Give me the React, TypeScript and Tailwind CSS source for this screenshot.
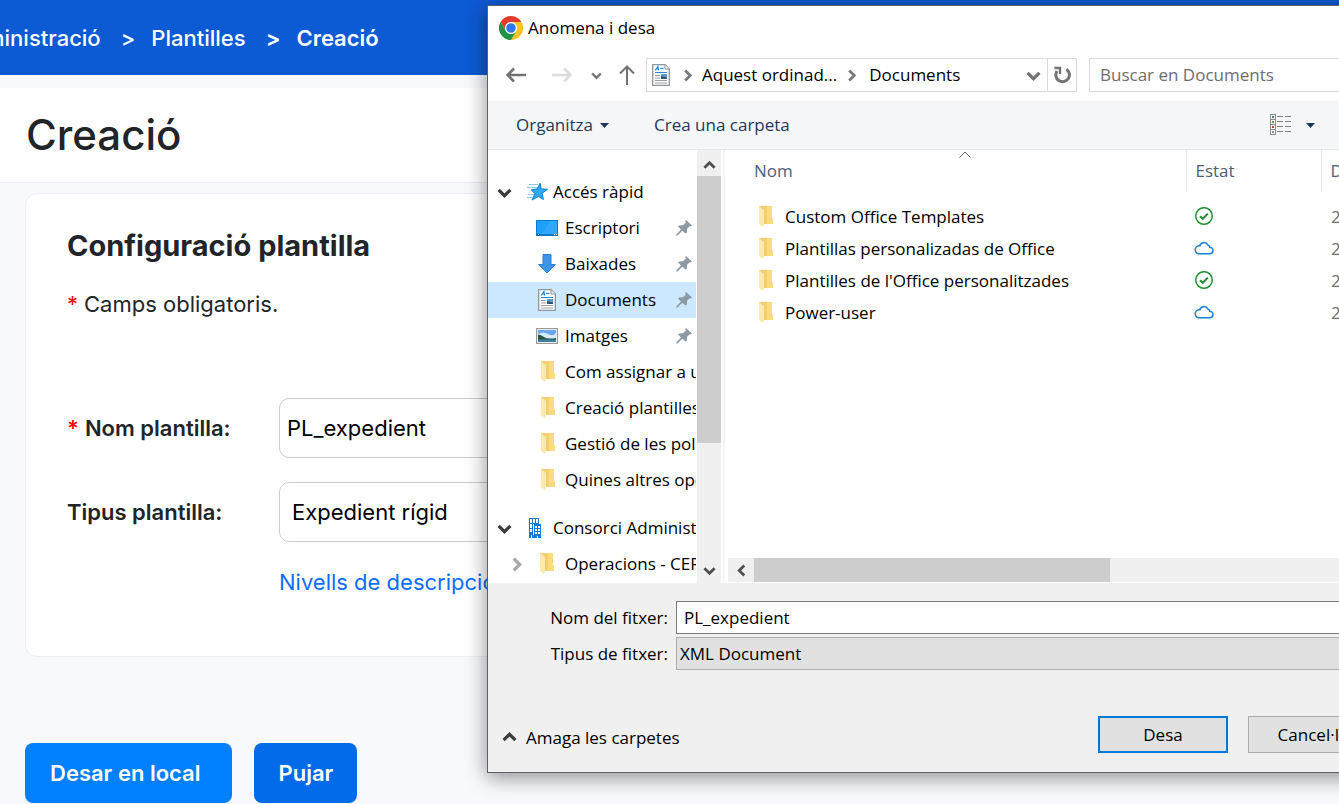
import { useState, type ReactNode } from 'react';

type IconName = 'desktop' | 'download' | 'document' | 'image' | 'folder';

const QUICK_ACCESS: { label: string; icon: IconName; pinned?: boolean }[] = [
  { label: 'Escriptori', icon: 'desktop', pinned: true },
  { label: 'Baixades', icon: 'download', pinned: true },
  { label: 'Documents', icon: 'document', pinned: true },
  { label: 'Imatges', icon: 'image', pinned: true },
  { label: 'Com assignar a un', icon: 'folder' },
  { label: 'Creació plantilles', icon: 'folder' },
  { label: 'Gestió de les polí', icon: 'folder' },
  { label: 'Quines altres oper', icon: 'folder' },
];

const FILES = [
  { name: 'Custom Office Templates', synced: true },
  { name: 'Plantillas personalizadas de Office', synced: false },
  { name: "Plantilles de l'Office personalitzades", synced: true },
  { name: 'Power-user', synced: false },
];

const ChromeLogo = () => (
  <svg className="h-6 w-6 shrink-0" viewBox="0 0 24 24">
    <circle cx="12" cy="12" r="12" fill="#fff" />
    <path d="M1.6 6 A12 12 0 0 1 22.4 6 L12 6 A6 6 0 0 0 6.8 15 Z" fill="#e33b2e" />
    <path d="M22.4 6 A12 12 0 0 1 12 24 L17.2 15 A6 6 0 0 0 12 6 Z" fill="#fcc31e" />
    <path d="M12 24 A12 12 0 0 1 1.6 6 L6.8 15 A6 6 0 0 0 17.2 15 Z" fill="#229342" />
    <circle cx="12" cy="12" r="5.8" fill="#fff" />
    <circle cx="12" cy="12" r="4.8" fill="#2f7bee" />
  </svg>
);

const Chevron = ({ dir, className }: { dir: 'up' | 'down' | 'left' | 'right'; className: string }) => {
  const d = {
    down: 'M1.5 4.5 L7 10 L12.5 4.5',
    up: 'M1.5 9.5 L7 4 L12.5 9.5',
    right: 'M4.5 1.5 L10 7 L4.5 12.5',
    left: 'M10 1.5 L4.5 7 L10 12.5',
  }[dir];
  return (
    <svg className={`shrink-0 ${className}`} viewBox="0 0 14 14" fill="none" stroke="currentColor" strokeWidth="3">
      <path d={d} />
    </svg>
  );
};

const FolderIcon = () => (
  <svg className="h-[22px] w-[15px] shrink-0" viewBox="0 0 15 22">
    <path d="M1 0 H14 V12 L15 13 V18 H5 Z" fill="#f4cf6e" />
    <path d="M9 0 H14 V12 L15 13 V18 H9 Z" fill="#fadb80" />
    <path d="M1 0 L6 4 V18 L5 21 L1 18 Z" fill="#ffe9ad" />
  </svg>
);

const DocumentIcon = () => (
  <svg className="h-[22px] w-[18px] shrink-0" viewBox="0 0 18 22" fill="none">
    <path d="M.7 .7 H13 L17.3 5 V21.3 H.7 Z" fill="#fff" stroke="#8f9499" strokeWidth="1.3" />
    <path d="M13 .7 V5 H17.3" fill="#eceff1" stroke="#8f9499" />
    <path d="M3 6.5 L6 2.5 L6.5 6.5 M4.5 5 H7" stroke="#1d8bd8" strokeWidth="1.2" />
    <path d="M8 4.5 H11.5 M3 8.5 H15" stroke="#1d8bd8" strokeWidth="1.2" />
    <path d="M3 11.5 H8 M3 14 H8 M3 16.5 H15 M3 19 H15" stroke="#9a9fa3" />
    <rect x="9" y="10" width="6" height="5" fill="#5a9bd0" />
    <path d="M9 15 V12 L15 13.5 V15 Z" fill="#2f5570" />
  </svg>
);

const DesktopIcon = () => (
  <svg className="h-4 w-[22px] shrink-0" viewBox="0 0 22 16">
    <rect width="22" height="16" fill="#0b78cc" />
    <rect x="1" y="1" width="20" height="13" fill="#1ea0f8" />
    <path d="M14 1 H21 V14 H6 Z" fill="#2fa8ff" />
    <path d="M2 14.5 H3 M18 14.5 H19 M20 14.5 H21" stroke="#fff" strokeWidth="1" />
  </svg>
);

const DownloadIcon = () => (
  <svg className="h-5 w-[18px] shrink-0" viewBox="0 0 18 20">
    <path d="M5 .5 H13 V10.5 H17.3 L9 19 L.7 10.5 H5 Z" fill="#3a96e8" stroke="#2b7fd0" />
  </svg>
);

const ImageIcon = () => (
  <svg className="h-4 w-[22px] shrink-0" viewBox="0 0 22 16">
    <rect x=".6" y=".6" width="20.8" height="14.8" fill="#fff" stroke="#9b9b9b" strokeWidth="1.2" />
    <rect x="2" y="2" width="18" height="12" fill="#6aa6ee" />
    <path d="M2 6 Q7 3 12 6 T20 5 V11 H2 Z" fill="#d5ebfb" />
    <path d="M2 6.5 Q5 6.5 8 9 T20 10 V12 H2 Z" fill="#2b5440" />
    <path d="M2 11.5 H20 V14 H2 Z" fill="#3f7fa3" />
  </svg>
);

const ICONS: Record<IconName, ReactNode> = {
  desktop: <DesktopIcon />,
  download: <DownloadIcon />,
  document: <DocumentIcon />,
  image: <ImageIcon />,
  folder: <FolderIcon />,
};

const StarIcon = () => (
  <svg className="h-5 w-[22px] shrink-0" viewBox="0 0 22 20" fill="none">
    <path d="M2 2.5 H11 M0 5.5 H10 M1 12.5 H7 M0 15.5 H6" stroke="#8ccbf4" />
    <path
      d="M13.2 1.2 L14.2 6.8 L20.6 7.3 L15.2 11.2 L16.4 17.6 L11.4 14.4 L5.2 18 L8 11.8 L4.2 7.8 L10 7 Z"
      fill="#2fa9f2"
      stroke="#1580cc"
    />
  </svg>
);

const BuildingIcon = () => (
  <svg className="h-5 w-3 shrink-0" viewBox="0 0 12 20" shapeRendering="crispEdges">
    <path d="M0 0 H10 V6 H12 V20 H0 Z" fill="#0f7bd8" />
    <path
      d="M1 1h2v4h-2z M4 1h2v4h-2z M7 1h2v4h-2z M1 6h2v4h-2z M1 11h2v3h-2z M6 8h2v2h-2z M9 8h2v2h-2z M6 11h2v2h-2z M9 11h2v2h-2z M6 14h2v2h-2z M9 14h2v2h-2z M4 6h1v11h-1z M2 17h1v3h-1z M8 18h1v2h-1z"
      fill="#fff"
    />
  </svg>
);

const PinIcon = () => (
  <svg className="h-4 w-4 shrink-0" viewBox="0 0 16 16" fill="#8d9aa3">
    <path d="M10 0 L16 5.5 L14.5 6.5 L13.5 6.3 L11 9 L11 12.5 L9.5 13.5 L6.3 10.8 L1.5 15.5 L0 15.5 L0.3 14.5 L5 9.6 L2 6.6 L3.2 5.4 L7 5.2 L9.8 2.8 L9.3 1.2 Z" />
  </svg>
);

const SyncedIcon = () => (
  <svg className="h-5 w-5" viewBox="0 0 20 20" fill="none" stroke="#1f8f33" strokeWidth="1.5">
    <circle cx="10" cy="9" r="8.3" />
    <path d="M6 9.2 L8.8 11.8 L13.8 6.6" strokeWidth="2" />
  </svg>
);

const CloudIcon = () => (
  <svg className="h-5 w-5" viewBox="0 0 20 20" fill="none" stroke="#1a7fd6" strokeWidth="1.5">
    <path d="M4.6 14.8 H15.6 A3.2 3.2 0 0 0 15.8 8.2 A2.6 2.6 0 0 0 13.8 6 A4.3 4.3 0 0 0 5.8 6.8 A4 4 0 0 0 4.6 14.8 Z" />
  </svg>
);

const ArrowIcon = ({ d, className }: { d: string; className: string }) => (
  <svg className={`h-5 w-5 ${className}`} viewBox="0 0 20 20" fill="none" stroke="currentColor">
    <path d={d} />
  </svg>
);

const Caret = () => (
  <svg className="h-[5px] w-[9px]" viewBox="0 0 9 5" fill="#1b365d">
    <path d="M0 0 H9 L4.5 5 Z" />
  </svg>
);

const NavigationPane = () => (
  <nav className="flex h-[433px] bg-white">
    <div className="w-[208px] overflow-hidden pt-6">
      <button className="flex h-9 w-full items-center whitespace-nowrap pl-[9px]">
        <Chevron dir="down" className="mr-[15px] h-[15px] w-[15px] text-[#3c3c3c]" />
        <StarIcon />
        <span className="ml-1">Accés ràpid</span>
      </button>
      {QUICK_ACCESS.map(item => (
        <button
          key={item.label}
          className={`flex h-9 w-full items-center whitespace-nowrap pl-12 ${item.label === 'Documents' ? 'bg-[#cce8ff]' : ''}`}
        >
          <span className="mr-[7px] flex w-[22px] shrink-0 justify-center">{ICONS[item.icon]}</span>
          {item.label}
          {item.pinned && (
            <span className="ml-auto pr-1">
              <PinIcon />
            </span>
          )}
        </button>
      ))}
      <button className="mt-3 flex h-9 w-full items-center whitespace-nowrap pl-[9px]">
        <Chevron dir="down" className="mr-[17px] h-[15px] w-[15px] text-[#3c3c3c]" />
        <BuildingIcon />
        <span className="ml-3">Consorci Administració</span>
      </button>
      <button className="flex h-9 w-full items-center whitespace-nowrap pl-[21px]">
        <Chevron dir="right" className="mr-[15px] h-[15px] w-[15px] text-[#a6a6a6]" />
        <FolderIcon />
        <span className="ml-[11px]">Operacions - CERT</span>
      </button>
    </div>
    <div className="ml-px flex w-6 flex-col items-center bg-[#f0f0f0]">
      <div className="flex h-[26px] items-center pt-1">
        <Chevron dir="up" className="h-[13px] w-[13px] text-[#505050]" />
      </div>
      <div className="h-[267px] w-full bg-[#cdcdcd]" />
      <div className="mt-auto flex h-[26px] items-center">
        <Chevron dir="down" className="h-[13px] w-[13px] text-[#505050]" />
      </div>
    </div>
  </nav>
);

const FileList = () => (
  <div className="flex min-w-0 flex-1 flex-col bg-white">
    <table className="ml-4 table-fixed text-left">
      <thead className="text-[#4c607a]">
        <tr className="h-[42px]">
          <th className="relative w-[442px] pl-[10px] font-normal">
            <svg
              className="absolute left-1/2 top-px h-[7px] w-3 -translate-x-1/2"
              viewBox="0 0 12 7"
              fill="none"
              stroke="#606060"
            >
              <path d="M.5 6.5 L6 1 L11.5 6.5" />
            </svg>
            Nom
          </th>
          <th className="w-[135px] border-l border-[#e5e5e5] pl-[9px] font-normal">Estat</th>
          <th className="border-l border-[#e5e5e5] pl-[9px] font-normal">Data</th>
        </tr>
        <tr className="h-[9px]" />
      </thead>
      <tbody>
        {FILES.map(file => (
          <tr key={file.name} className="h-8">
            <td className="pl-[14px]">
              <span className="flex items-center gap-3">
                <FolderIcon />
                {file.name}
              </span>
            </td>
            <td className="pl-2">{file.synced ? <SyncedIcon /> : <CloudIcon />}</td>
            <td className="pl-[10px] text-[#6d6d6d]">2</td>
          </tr>
        ))}
      </tbody>
    </table>
    <div className="mt-auto mb-px flex h-6 items-center bg-[#f0f0f0]">
      <span className="flex w-[26px] justify-center">
        <Chevron dir="left" className="h-[13px] w-[13px] text-[#505050]" />
      </span>
      <div className="h-full w-[356px] bg-[#cdcdcd]" />
    </div>
  </div>
);

const SaveDialog = () => {
  const [fileName, setFileName] = useState('PL_expedient');

  return (
    <div
      role="dialog"
      aria-label="Anomena i desa"
      className="absolute left-[487px] -right-16 top-[5px] border border-[#5f6165] bg-white text-[17px] leading-6 text-black shadow-[0_4px_20px_rgba(0,0,0,0.45)] [font-family:'Open_Sans','Noto_Sans',sans-serif]"
    >
      <div className="flex h-[52px] items-center gap-[5px] pb-[9px] pl-[11px]">
        <ChromeLogo />
        Anomena i desa
      </div>

      <div className="flex h-[43px] pb-[9px]">
        <div className="flex w-[158px] items-center pl-[18px] text-[#737373]">
          <button aria-label="Enrere">
            <ArrowIcon d="M1 10 H20 M8 3.5 L1.5 10 L8 16.5" className="stroke-[2.6]" />
          </button>
          <button aria-label="Endavant" className="ml-[26px] text-[#dcdcdc]">
            <ArrowIcon d="M0 10 H19 M12 3.5 L18.5 10 L12 16.5" className="stroke-[2.6]" />
          </button>
          <button aria-label="Recents" className="ml-[19px]">
            <Chevron dir="down" className="h-[11px] w-[11px]" />
          </button>
          <button aria-label="Amunt" className="ml-[15px]">
            <ArrowIcon d="M10 1 V20 M3 8.5 L10 1.5 L17 8.5" className="stroke-2" />
          </button>
        </div>
        <div className="flex min-w-0 flex-1 items-center whitespace-nowrap border border-[#d9d9d9] pl-[5px]">
          <DocumentIcon />
          <Chevron dir="right" className="ml-[11px] mr-2 h-[13px] w-[13px] text-[#7a7a7a]" />
          <button>Aquest ordinad...</button>
          <Chevron dir="right" className="ml-2 mr-[11px] h-[13px] w-[13px] text-[#7a7a7a]" />
          <button>Documents</button>
          <button aria-label="Ubicacions anteriors" className="ml-auto px-[6px] text-[#737373]">
            <Chevron dir="down" className="h-[15px] w-[15px]" />
          </button>
          <button
            aria-label="Actualitza"
            className="flex h-full w-[29px] items-center justify-center border-l border-[#d9d9d9] text-[#737373]"
          >
            <svg className="h-[18px] w-[18px]" viewBox="0 0 18 18" fill="none" stroke="currentColor" strokeWidth="3">
              <path d="M13.4 3.2 A6.8 6.8 0 1 1 4 5" />
              <path d="M1.5 2 H7 V8" strokeWidth="2.4" />
            </svg>
          </button>
        </div>
        <input
          type="search"
          aria-label="Buscar en Documents"
          placeholder="Buscar en Documents"
          className="ml-3 mr-6 w-[289px] border border-[#d9d9d9] px-[10px] outline-none placeholder:text-[#6d6d6d]"
        />
      </div>

      <div className="flex h-[49px] items-center border-b border-[#e5e7ea] bg-[#f4f6f8] pl-7 text-[#1e395b]">
        <button className="flex items-center gap-[7px]">
          Organitza
          <Caret />
        </button>
        <button className="ml-[45px]">Crea una carpeta</button>
        <button aria-label="Canvia la vista" className="ml-auto mr-[87px] flex items-center gap-[14px]">
          <svg className="h-[22px] w-[22px]" viewBox="0 0 22 22" shapeRendering="crispEdges" fill="none">
            <path d="M.5 .5 H5.5 V20.5 H.5 Z M.5 5.5 H5.5 M.5 10.5 H5.5 M.5 15.5 H5.5" stroke="#8c8c8c" />
            <rect x="2" y="2" width="2" height="2" fill="#3b7f8f" />
            <rect x="2" y="7" width="2" height="2" fill="#7a8f3b" />
            <rect x="2" y="12" width="2" height="2" fill="#c4421f" />
            <rect x="2" y="17" width="2" height="2" fill="#8593ad" />
            <path
              d="M7 2.5 H13 M15 2.5 H21 M7 7.5 H13 M15 7.5 H21 M7 12.5 H13 M15 12.5 H21 M7 17.5 H13 M15 17.5 H21"
              stroke="#7d7d7d"
            />
          </svg>
          <Caret />
        </button>
      </div>

      <div className="flex">
        <NavigationPane />
        <div className="mr-[3px] w-1 border-l-2 border-white bg-[#f3f3f3]" />
        <FileList />
      </div>

      <div className="bg-[#f0f0f0] pb-[19px] pt-[18px]">
        <div className="grid grid-cols-[180px_1fr] items-center gap-x-2 gap-y-[3px] pr-6">
          <label htmlFor="file-name" className="text-right">Nom del fitxer:</label>
          <input
            id="file-name"
            type="text"
            value={fileName}
            onChange={e => setFileName(e.target.value)}
            className="h-[33px] min-w-0 border border-[#7a7a7a] bg-white px-[7px] outline-none"
          />
          <label htmlFor="file-type" className="text-right">Tipus de fitxer:</label>
          <select
            id="file-type"
            className="h-[33px] min-w-0 appearance-none border border-[#adadad] bg-[#e1e1e1] px-[3px] outline-none"
          >
            <option>XML Document</option>
          </select>
        </div>
        <div className="mt-[46px] flex items-center pr-6">
          <button className="flex items-center gap-[9px] pl-[14px] pt-[6px]">
            <Chevron dir="up" className="h-[15px] w-[15px] text-[#3c3c3c]" />
            Amaga les carpetes
          </button>
          <button className="ml-auto h-[37px] w-[130px] border-2 border-[#0078d7] bg-[#e1e1e1]">Desa</button>
          <button className="ml-5 h-[37px] w-[130px] border border-[#adadad] bg-[#e1e1e1]">Cancel·la</button>
        </div>
      </div>
    </div>
  );
};

const App = () => {
  const [name, setName] = useState('PL_expedient');

  return (
    <div className="relative min-h-screen overflow-hidden bg-[#f8f9fd] text-[22px] leading-8 text-[#212529] [font-family:Inter,'Open_Sans',sans-serif]">
      <header className="-ml-11 flex h-[75px] items-center whitespace-nowrap bg-[#0d5ad5] font-medium text-white">
        <a href="#administracio">Administració</a>
        <span className="ml-5 mr-4">&gt;</span>
        <a href="#plantilles">Plantilles</a>
        <span className="ml-5 mr-4 font-semibold">&gt;</span>
        <span className="font-semibold">Creació</span>
      </header>

      <div className="mt-[13px] flex h-[95px] items-center border-b border-[#e9ebee] bg-white pl-[26px]">
        <h1 className="text-[42px] font-medium">Creació</h1>
      </div>

      <main className="px-[25px] pt-[10px]">
        <section className="rounded-xl border border-[#eceef1] bg-white px-[41px] pb-[58px] pt-9">
          <h2 className="text-[29px] font-bold">Configuració plantilla</h2>
          <p className="mt-[26px]">
            <span className="mr-[6px] text-[#ff0000]">*</span>
            Camps obligatoris.
          </p>
          <div className="mt-[78px] grid grid-cols-[212px_1fr] items-center gap-y-6">
            <label htmlFor="template-name" className="font-semibold">
              <span className="mr-[6px] text-[#ff0000]">*</span>
              Nom plantilla:
            </label>
            <input
              id="template-name"
              type="text"
              value={name}
              onChange={e => setName(e.target.value)}
              className="h-[60px] rounded-[10px] border border-[#c8ccd1] px-[7px] text-black outline-none"
            />
            <label htmlFor="template-type" className="font-semibold">Tipus plantilla:</label>
            <select
              id="template-type"
              className="h-[60px] appearance-none rounded-[10px] border border-[#c8ccd1] bg-white px-3 text-black outline-none"
            >
              <option>Expedient rígid</option>
            </select>
            <a href="#nivells" className="col-start-2 text-[#0d6efd]">Nivells de descripció</a>
          </div>
        </section>

        <div className="mt-[86px] flex gap-[22px] pb-px font-semibold text-white">
          <button className="h-[60px] rounded-lg bg-[#007fff] pl-[25px] pr-8">Desar en local</button>
          <button className="h-[60px] rounded-lg bg-[#006ae8] px-6">Pujar</button>
        </div>
      </main>

      <SaveDialog />
    </div>
  );
};

export default App;
